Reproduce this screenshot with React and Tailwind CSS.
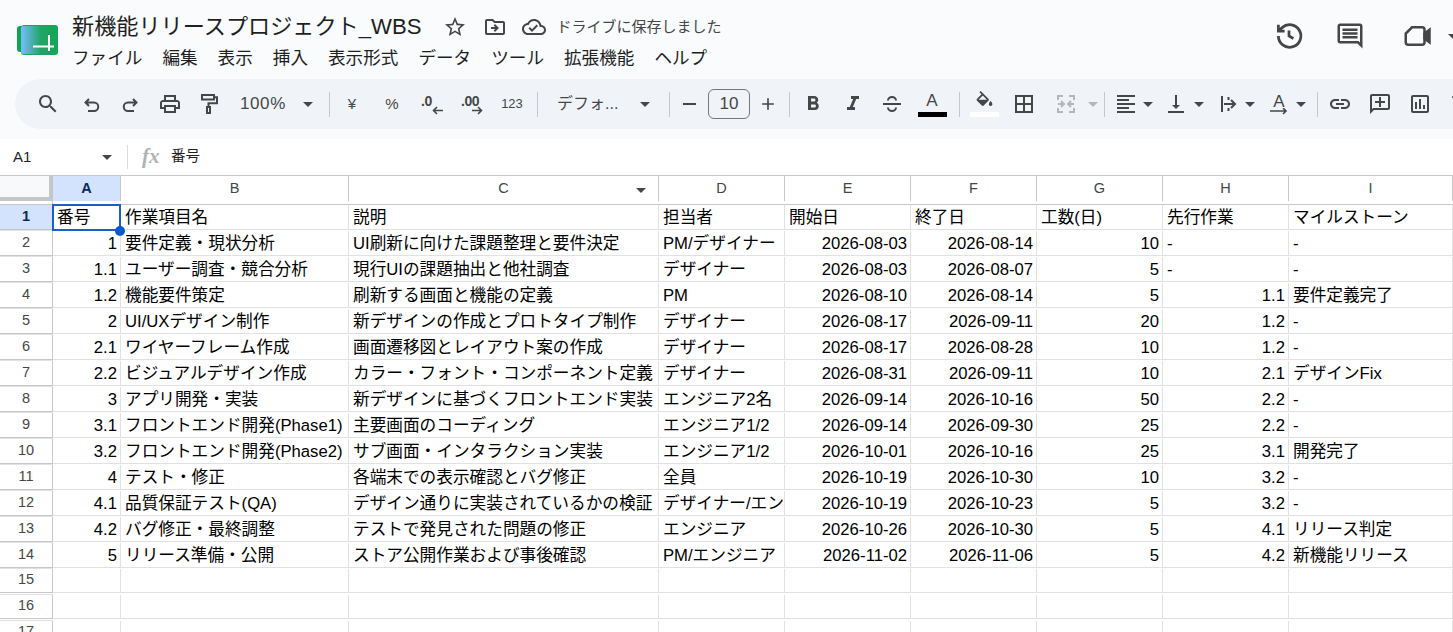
const ink = "#444746";

const menus = ["ファイル", "編集", "表示", "挿入", "表示形式", "データ", "ツール", "拡張機能", "ヘルプ"];

const columns = ["A", "B", "C", "D", "E", "F", "G", "H", "I", ""];

const rows = [
  ["番号", "作業項目名", "説明", "担当者", "開始日", "終了日", "工数(日)", "先行作業", "マイルストーン"],
  ["1", "要件定義・現状分析", "UI刷新に向けた課題整理と要件決定", "PM/デザイナー", "2026-08-03", "2026-08-14", "10", "-", "-"],
  ["1.1", "ユーザー調査・競合分析", "現行UIの課題抽出と他社調査", "デザイナー", "2026-08-03", "2026-08-07", "5", "-", "-"],
  ["1.2", "機能要件策定", "刷新する画面と機能の定義", "PM", "2026-08-10", "2026-08-14", "5", "1.1", "要件定義完了"],
  ["2", "UI/UXデザイン制作", "新デザインの作成とプロトタイプ制作", "デザイナー", "2026-08-17", "2026-09-11", "20", "1.2", "-"],
  ["2.1", "ワイヤーフレーム作成", "画面遷移図とレイアウト案の作成", "デザイナー", "2026-08-17", "2026-08-28", "10", "1.2", "-"],
  ["2.2", "ビジュアルデザイン作成", "カラー・フォント・コンポーネント定義", "デザイナー", "2026-08-31", "2026-09-11", "10", "2.1", "デザインFix"],
  ["3", "アプリ開発・実装", "新デザインに基づくフロントエンド実装", "エンジニア2名", "2026-09-14", "2026-10-16", "50", "2.2", "-"],
  ["3.1", "フロントエンド開発(Phase1)", "主要画面のコーディング", "エンジニア1/2", "2026-09-14", "2026-09-30", "25", "2.2", "-"],
  ["3.2", "フロントエンド開発(Phase2)", "サブ画面・インタラクション実装", "エンジニア1/2", "2026-10-01", "2026-10-16", "25", "3.1", "開発完了"],
  ["4", "テスト・修正", "各端末での表示確認とバグ修正", "全員", "2026-10-19", "2026-10-30", "10", "3.2", "-"],
  ["4.1", "品質保証テスト(QA)", "デザイン通りに実装されているかの検証", "デザイナー/エンジニア", "2026-10-19", "2026-10-23", "5", "3.2", "-"],
  ["4.2", "バグ修正・最終調整", "テストで発見された問題の修正", "エンジニア", "2026-10-26", "2026-10-30", "5", "4.1", "リリース判定"],
  ["5", "リリース準備・公開", "ストア公開作業および事後確認", "PM/エンジニア", "2026-11-02", "2026-11-06", "5", "4.2", "新機能リリース"],
  ["", "", "", "", "", "", "", "", ""],
  ["", "", "", "", "", "", "", "", ""],
  ["", "", "", "", "", "", "", "", ""],
];

function Icon({ d, size = 24, color = ink }) {
  return (
    <svg width={size} height={size} viewBox="0 0 24 24" fill={color}>
      <path d={d} />
    </svg>
  );
}

function Line({ children, size = 24, color = ink, width = 2 }) {
  return (
    <svg width={size} height={size} viewBox="0 0 24 24" fill="none" stroke={color} strokeWidth={width}>
      {children}
    </svg>
  );
}

function Caret({ color = ink }) {
  return (
    <svg width="10" height="5" viewBox="0 0 10 5" fill={color} className="shrink-0">
      <path d="M0 0h10L5 5z" />
    </svg>
  );
}

function Divider() {
  return <div className="h-[25px] w-px shrink-0 bg-[#c7c7c7]" />;
}

function Cell({ w, children }) {
  return <div className={`flex h-full shrink-0 items-center justify-center ${w}`}>{children}</div>;
}

function Toolbar() {
  return (
    <div className="ml-[15px] flex h-[50px] items-center overflow-hidden rounded-l-[25px] bg-[#f0f4f9] pl-[13px] text-[#444746]">
      <Cell w="w-[40px]">
        <Icon d="M15.5 14h-.79l-.28-.27C15.41 12.59 16 11.11 16 9.5 16 5.91 13.09 3 9.5 3S3 5.91 3 9.5 5.91 16 9.5 16c1.61 0 3.09-.59 4.23-1.57l.27.28v.79l5 4.99L20.49 19l-4.99-5zm-6 0C7.01 14 5 11.99 5 9.5S7.01 5 9.5 5 14 7.01 14 9.5 11.99 14 9.5 14z" />
      </Cell>
      <div className="w-[5px] shrink-0" />
      <Cell w="w-[38px]">
        <Line><path d="M9 7 5.5 10.500 9 14M5.500 10.500H14a4.200 4.200 0 0 1 0 8.500H8" /></Line>
      </Cell>
      <Cell w="w-[38px]">
        <Line><path d="M15 7l3.500 3.500L15 14M18.500 10.500H10a4.200 4.200 0 0 0 0 8.500h6" /></Line>
      </Cell>
      <Cell w="w-[42px]">
        <Icon d="M19 8h-1V3H6v5H5c-1.660 0-3 1.340-3 3v6h4v4h12v-4h4v-6c0-1.660-1.340-3-3-3zM8 5h8v3H8V5zm8 12v2H8v-4h8v2zm2-2v-2H6v2H4v-4c0-.550.450-1 1-1h14c.550 0 1 .450 1 1v4h-2z" />
      </Cell>
      <Cell w="w-[36px]">
        <Line><rect x="5" y="3" width="12" height="4.500" /><path d="M17 5.200h3v6h-8.500V15" /><rect x="10" y="15" width="3" height="6" /></Line>
      </Cell>
      <div className="flex h-full w-[102px] shrink-0 items-center pl-[13px]">
        <span className="text-[17px] tracking-[0.6px]">100%</span>
        <span className="ml-[17px] flex"><Caret /></span>
      </div>
      <Divider />
      <Cell w="w-[44px] text-[15px]">¥</Cell>
      <Cell w="w-[36px] text-[15px]">%</Cell>
      <Cell w="w-[44px]">
        <div className="relative h-[24px] w-[22px] text-[14px] font-bold leading-[18px] tracking-[-0.5px]">
          .0
          <svg className="absolute bottom-[1px] right-[0px]" width="11" height="9" viewBox="0 0 11 9" fill="none" stroke={ink} strokeWidth="1.600"><path d="M11 4.500H1.500M5 1 1.500 4.500 5 8" /></svg>
        </div>
      </Cell>
      <Cell w="w-[36px]">
        <div className="relative h-[24px] w-[22px] whitespace-nowrap text-[14px] font-bold leading-[18px] tracking-[-0.5px]">
          .00
          <svg className="absolute bottom-[1px] right-[0px]" width="11" height="9" viewBox="0 0 11 9" fill="none" stroke={ink} strokeWidth="1.600"><path d="M0 4.500h9.500M6 1l3.500 3.500L6 8" /></svg>
        </div>
      </Cell>
      <Cell w="w-[44px] text-[13px]">123</Cell>
      <div className="w-[3px] shrink-0" />
      <Divider />
      <div className="flex h-full w-[131px] shrink-0 items-center pl-[19px]">
        <span className="w-[83px] whitespace-nowrap text-[16px]">デフォ...</span>
        <Caret />
      </div>
      <Divider />
      <Cell w="w-[38px]">
        <div className="h-[2px] w-[13px] bg-[#444746]" />
      </Cell>
      <div className="flex h-[30px] w-[42px] shrink-0 items-center justify-center rounded-[6px] border border-[#747775] text-[17px]">10</div>
      <Cell w="w-[36px]">
        <Icon size={20} d="M11 5h2v6h6v2h-6v6h-2v-6H5v-2h6z" />
      </Cell>
      <div className="w-[3px] shrink-0" />
      <Divider />
      <Cell w="w-[46px]">
        <Icon d="M15.600 10.790c.970-.670 1.650-1.770 1.650-2.790 0-2.260-1.750-4-4-4H7v14h7.040c2.090 0 3.710-1.700 3.710-3.790 0-1.520-.860-2.820-2.150-3.420zM10 6.500h3c.830 0 1.500.670 1.500 1.500s-.670 1.500-1.500 1.500h-3v-3zm3.500 9H10v-3h3.500c.830 0 1.500.670 1.500 1.500s-.670 1.500-1.500 1.500z" />
      </Cell>
      <Cell w="w-[34px]">
        <Icon d="M10 4v3h2.210l-3.420 8H6v3h8v-3h-2.210l3.420-8H18V4z" />
      </Cell>
      <Cell w="w-[44px]">
        <Line><path d="M3 12h18M8 8.500a4 3.500 0 0 1 8 0M8 15.500a4 3.500 0 0 0 8 0" /></Line>
      </Cell>
      <Cell w="w-[36px]">
        <div className="flex w-[29px] flex-col items-center">
          <span className="text-[17px] leading-[19px]">A</span>
          <div className="mt-[2px] h-[5px] w-[29px] bg-black" />
        </div>
      </Cell>
      <div className="w-[9px] shrink-0" />
      <Divider />
      <Cell w="w-[48px]">
        <div className="flex w-[29px] flex-col items-center">
          <Icon size={21} d="M16.560 8.940 7.620 0 6.210 1.410l2.380 2.380-5.150 5.150c-.590.590-.590 1.540 0 2.120l5.500 5.500c.290.290.680.440 1.060.440s.770-.150 1.060-.440l5.500-5.500c.590-.580.590-1.530 0-2.120zM5.210 10 10 5.210 14.790 10H5.210zM19 11.500s-2 2.170-2 3.500c0 1.100.900 2 2 2s2-.900 2-2c0-1.330-2-3.500-2-3.500z" />
          <div className="h-[5px] w-[29px] bg-white" />
        </div>
      </Cell>
      <Cell w="w-[32px]">
        <Icon d="M3 3v18h18V3H3zm8 16H5v-6h6v6zm0-8H5V5h6v6zm8 8h-6v-6h6v6zm0-8h-6V5h6v6z" />
      </Cell>
      <div className="w-[4px] shrink-0" />
      <Cell w="w-[44px]">
        <Line color="#b4b6b7"><path d="M4 8V4h5M15 4h5v4M4 16v4h5M15 20h5v-4M4 12h6M7 9l3 3-3 3M20 12h-6M17 9l-3 3 3 3" /></Line>
      </Cell>
      <Cell w="w-[10px]"><Caret color="#b4b6b7" /></Cell>
      <div className="w-[6px] shrink-0" />
      <Divider />
      <div className="flex h-full w-[59px] shrink-0 items-center gap-[5px] pl-[9px]">
        <span className="flex shrink-0"><Icon d="M15 15H3v2h12v-2zm0-8H3v2h12V7zM3 13h18v-2H3v2zm0 8h18v-2H3v2zM3 3v2h18V3H3z" /></span>
        <Caret />
      </div>
      <div className="flex h-full w-[52px] shrink-0 items-center gap-[6px]">
        <span className="flex shrink-0"><Icon d="M16 13h-3V3h-2v10H8l4 4 4-4zM4 19v2h16v-2H4z" /></span>
        <Caret />
      </div>
      <div className="flex h-full w-[51px] shrink-0 items-center gap-[5px]">
        <span className="flex shrink-0">
          <Line><path d="M6 4v16M8 12h11M15 8l4 4-4 4M12.500 5v3M12.500 16v3" /></Line>
        </span>
        <Caret />
      </div>
      <div className="flex h-full w-[50px] shrink-0 items-center gap-[5px]">
        <div className="relative h-[24px] w-[24px] shrink-0 text-center text-[17px] leading-[20px]">
          A
          <svg className="absolute bottom-[0px] left-[3px]" width="18" height="8" viewBox="0 0 18 8" fill="none" stroke={ink} strokeWidth="1.600"><path d="M0 3h16M13 0l3 3-3 3" /></svg>
        </div>
        <Caret />
      </div>
      <Divider />
      <Cell w="w-[44px]">
        <Icon d="M17 7h-4v2h4c1.650 0 3 1.350 3 3s-1.350 3-3 3h-4v2h4c2.760 0 5-2.240 5-5s-2.240-5-5-5zm-6 8H7c-1.650 0-3-1.350-3-3s1.350-3 3-3h4V7H7c-2.760 0-5 2.240-5 5s2.240 5 5 5h4v-2zm-3-4h8v2H8z" />
      </Cell>
      <Cell w="w-[36px]">
        <Icon d="M20 2H4c-1.100 0-2 .900-2 2v18l4-4h14c1.100 0 2-.900 2-2V4c0-1.100-.900-2-2-2zm0 14H5.170L4 17.170V4h16v12zM11 5h2v4h4v2h-4v4h-2v-4H7V9h4z" />
      </Cell>
      <Cell w="w-[44px]">
        <Icon d="M9 17H7v-7h2v7zm4 0h-2V7h2v10zm4 0h-2v-4h2v4zm2 2H5V5h14v14zm0-16H5c-1.100 0-2 .900-2 2v14c0 1.100.900 2 2 2h14c1.100 0 2-.900 2-2V5c0-1.100-.900-2-2-2z" />
      </Cell>
      <Cell w="w-[36px]">
        <Icon d="M4.250 5.610C6.270 8.200 10 13 10 13v6c0 .550.450 1 1 1h2c.550 0 1-.450 1-1v-6s3.720-4.800 5.740-7.390C20.250 4.950 19.780 4 18.950 4H5.040c-.830 0-1.300.950-.790 1.610z" />
      </Cell>
    </div>
  );
}

function Header() {
  return (
    <header className="h-[139px] bg-[#f9fbfd]">
      <div className="flex h-[79px]">
        <div className="flex w-[72px] shrink-0 items-center pl-[17px]">
          <svg width="41" height="30" viewBox="0 0 41 30">
            <defs>
              <linearGradient id="logoFill" x1="0" x2="1" y1="0" y2="0">
                <stop offset="0" stopColor="#77bcff" />
                <stop offset="0.75" stopColor="#1fa463" />
              </linearGradient>
            </defs>
            <rect x="0" y="1" width="14" height="26" rx="3" fill="#12a150" />
            <rect x="4" y="0" width="37" height="30" rx="3" fill="#17a55a" />
            <rect x="4" y="1" width="27" height="28" rx="2" fill="url(#logoFill)" />
            <path d="M16 21.500h21M32 10v16" stroke="#fff" strokeWidth="2" fill="none" />
          </svg>
        </div>
        <div className="flex min-w-0 flex-1 flex-col pt-[12px]">
          <div className="flex h-[30px] items-center">
            <span className="whitespace-nowrap text-[22.150px] text-[#1f1f1f]">新機能リリースプロジェクト_WBS</span>
            <span className="ml-[22px] flex">
              <Icon size={24} d="M22 9.240l-7.190-.620L12 2 9.190 8.630 2 9.240l5.460 4.730L5.820 21 12 17.270 18.180 21l-1.630-7.030L22 9.240zM12 15.400l-3.760 2.270 1-4.280-3.320-2.880 4.380-.380L12 6.100l1.710 4.040 4.380.380-3.320 2.880 1 4.280L12 15.400z" />
            </span>
            <span className="ml-[16px] flex">
              <Icon size={24} d="M20 6h-8l-2-2H4c-1.100 0-2 .900-2 2v12c0 1.100.900 2 2 2h16c1.100 0 2-.900 2-2V8c0-1.100-.900-2-2-2zm0 12H4V6h5.170l2 2H20v10zm-8.010-9-1.410 1.410L12.170 12H8v2h4.170l-1.590 1.590L11.990 17 16 13l-4.010-4z" />
            </span>
            <span className="ml-[15px] flex">
              <Icon size={24} d="M19.350 10.040C18.670 6.590 15.640 4 12 4 9.110 4 6.600 5.640 5.350 8.040 2.340 8.360 0 10.910 0 14c0 3.310 2.690 6 6 6h13c2.760 0 5-2.240 5-5 0-2.640-2.050-4.780-4.650-4.960zM19 18H6c-2.210 0-4-1.790-4-4 0-2.050 1.530-3.760 3.560-3.970l1.070-.110.500-.950C8.080 7.140 9.940 6 12 6c2.620 0 4.880 1.860 5.390 4.430l.300 1.500 1.530.110c1.560.100 2.780 1.410 2.780 2.960 0 1.650-1.350 3-3 3zm-9-3.820-2.090-2.090L6.500 13.500 10 17l6.010-6.010-1.410-1.410z" />
            </span>
            <span className="ml-[10px] whitespace-nowrap text-[15px] text-[#444746]">ドライブに保存しました</span>
          </div>
          <div className="mt-[2px] flex h-[28px] items-center gap-[20px] text-[17.600px] text-[#1f1f1f]">
            {menus.map((m) => (
              <span key={m} className="whitespace-nowrap">{m}</span>
            ))}
          </div>
        </div>
        <div className="flex w-[205px] shrink-0 items-start pt-[21px]">
          <span className="ml-[26px] flex">
            <Line size={30} width={2.200}><path d="M3.500 12a9 9 0 1 0 3-6.700L3.500 8M3.500 3v5h5M12 7.500V12l3.500 2" /></Line>
          </span>
          <span className="ml-[31px] flex">
            <Icon size={30} d="M21.990 4c0-1.100-.890-2-1.990-2H4c-1.100 0-2 .900-2 2v12c0 1.100.900 2 2 2h14l4 4-.010-18zM20 4v13.170L18.830 16H4V4h16zM6 12h12v2H6zm0-3h12v2H6zm0-3h12v2H6z" />
          </span>
          <span className="ml-[37px] flex">
            <Line size={30} width={2}><path d="M8 5h8a2 2 0 0 1 2 2v10a2 2 0 0 1-2 2H5a2 2 0 0 1-2-2v-7z" /><path d="M18 10l4-3v10l-4-3z" fill={ink} /></Line>
          </span>
          <span className="ml-[16px] mt-[13px] flex"><Caret /></span>
        </div>
      </div>
      <Toolbar />
    </header>
  );
}

function FormulaBar() {
  return (
    <div className="flex h-[36px] items-center bg-white">
      <span className="w-[102px] shrink-0 pl-[13px] text-[15px] text-[#1f1f1f]">A1</span>
      <Caret />
      <div className="ml-[15px] h-[24px] w-px bg-[#dadce0]" />
      <span className="ml-[14px] w-[29px] shrink-0 font-['Liberation_Serif',serif] text-[21px] italic font-bold text-[#b0b2b3]">fx</span>
      <span className="text-[14.500px] text-[#1f1f1f]">番号</span>
    </div>
  );
}

function Sheet() {
  const gridClass = "grid grid-cols-[53px_68px_228px_310px_126px_126px_126px_126px_126px_1fr]";
  const rightAligned = [0, 4, 5, 6];

  return (
    <div className="relative">
      <div className={`${gridClass} h-[30px] border-y border-[#c7c7c7]`}>
        <div className="border-b-[4px] border-r-[4px] border-[#c4c7c5] bg-[#f8f9fa]" />
        {columns.map((c, i) => (
          <div
            key={i}
            className={`flex items-center justify-center border-r border-[#c7c7c7] text-[14.500px] ${
              i === 0 ? "bg-[#d3e3fd] font-bold text-[#0b2a58]" : "text-[#444746]"
            } ${c === "C" ? "relative" : ""}`}
          >
            {c}
            {c === "C" && (
              <span className="absolute right-[12px] top-[12px] flex"><Caret /></span>
            )}
          </div>
        ))}
      </div>

      {rows.map((row, r) => (
        <div key={r} className={`${gridClass} h-[26px]`}>
          <div
            className={`flex items-center justify-center border-b border-r border-[#c7c7c7] pb-[1px] text-[14.500px] ${
              r === 0 ? "bg-[#d3e3fd] font-bold text-[#0b2a58]" : "text-[#444746]"
            }`}
          >
            {r + 1}
          </div>
          {row.map((text, c) => {
            const numeric = rightAligned.includes(c) && r > 0;
            const rightText = c === 7 && r > 0 && text !== "-";
            return (
              <div
                key={c}
                className={`flex items-center overflow-hidden whitespace-nowrap border-b border-r border-[#e1e1e1] pt-[1px] text-[16.670px] text-black ${
                  numeric || rightText ? "justify-end pr-[3px]" : "pl-[4px]"
                }`}
              >
                {text}
              </div>
            );
          })}
          <div className="border-b border-[#e1e1e1]" />
        </div>
      ))}

      {/* selection outline on A1 */}
      <div className="absolute left-[52px] top-[29px] h-[27px] w-[69px] border-2 border-[#1a5fd0]" />
      <div className="absolute left-[115px] top-[51px] h-[10px] w-[10px] rounded-full bg-[#0b57d0]" />
    </div>
  );
}

export default function App() {
  return (
    <div className="h-screen overflow-hidden bg-white font-['Liberation_Sans','Noto_Sans_CJK_JP',sans-serif]">
      <Header />
      <FormulaBar />
      <Sheet />
    </div>
  );
}
